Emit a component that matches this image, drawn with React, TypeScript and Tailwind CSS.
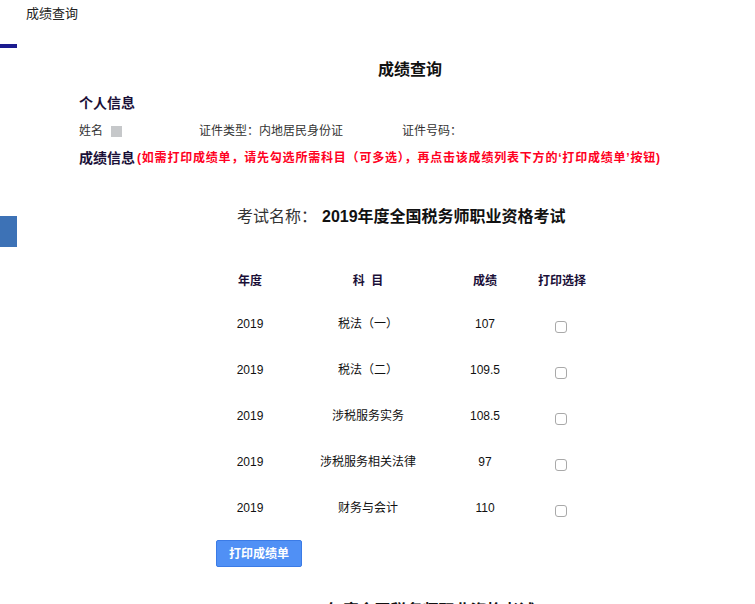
import React from "react";

type Score = { year: string; subject: string; score: string };

const scores: Score[] = [
  { year: "2019", subject: "税法（一）", score: "107" },
  { year: "2019", subject: "税法（二）", score: "109.5" },
  { year: "2019", subject: "涉税服务实务", score: "108.5" },
  { year: "2019", subject: "涉税服务相关法律", score: "97" },
  { year: "2019", subject: "财务与会计", score: "110" },
];

const font = { fontFamily: '"Liberation Sans", "Noto Sans CJK SC", sans-serif' };

export default function App() {
  return (
    <div
      className="w-[755px] h-[604px] overflow-hidden bg-white text-[#222]"
      style={font}
    >
      {/* top tab */}
      <div className="h-[44px] pl-[26px] pt-[5px] text-[13px] leading-[18px] text-[#222]">
        成绩查询
      </div>

      <div className="flex">
        {/* left rail */}
        <div className="w-[17px] shrink-0 flex flex-col">
          <div className="h-[4px] bg-[#1b1b8f]" />
          <div className="mt-[168px] h-[31px] bg-[#3d72b6]" />
        </div>

        <div className="ml-[62px] w-[662px] flex flex-col">
          <div className="mt-[16px] h-[20px] text-center text-[16px] leading-[20px] font-bold text-[#111]">
            成绩查询
          </div>

          <div className="mt-[13px] h-[20px] text-[14px] leading-[20px] font-bold text-[#1a0f38]">
            个人信息
          </div>

          <div className="mt-[9px] h-[18px] flex items-center text-[12px] leading-[18px] text-[#333]">
            <span>姓名</span>
            <span className="ml-[8px] w-[11px] h-[11px] bg-[#c6c8ca]" />
            <span className="ml-[77px]">证件类型：内地居民身份证</span>
            <span className="ml-[59px]">证件号码：</span>
          </div>

          <div className="mt-[8px] h-[20px] flex items-center whitespace-nowrap">
            <span className="text-[14px] leading-[20px] font-bold text-[#1a0f38]">成绩信息</span>
            <span className="ml-[2px] text-[12px] leading-[20px] font-bold tracking-[0.8px] text-[#ff0022]">
              (如需打印成绩单，请先勾选所需科目（可多选），再点击该成绩列表下方的‘打印成绩单’按钮)
            </span>
          </div>

          <div className="mt-[38px] h-[22px] ml-[158px] flex items-center whitespace-nowrap text-[16px] leading-[22px]">
            <span className="text-[#333]">考试名称：</span>
            <span className="ml-[5px] font-bold text-[#111]">2019年度全国税务师职业资格考试</span>
          </div>

          {/* table */}
          <div className="ml-[141px] mt-[44px]">
            <div className="grid grid-cols-[60px_176px_58px_96px] h-[18px] items-center text-center text-[12px] leading-[18px] font-bold text-[#1a0f38]">
              <span>年度</span>
              <span>科&nbsp;&nbsp;目</span>
              <span>成绩</span>
              <span>打印选择</span>
            </div>
            <div className="mt-[11px] flex flex-col">
              {scores.map((s) => (
                <div
                  key={s.subject}
                  className="grid grid-cols-[60px_176px_58px_96px] h-[46px] items-center text-center text-[12px] leading-[18px] text-[#111]"
                >
                  <span>{s.year}</span>
                  <span>{s.subject}</span>
                  <span>{s.score}</span>
                  <span className="flex justify-center pt-[6px] pr-[2px]">
                    <input
                      type="checkbox"
                      className="appearance-none w-[12px] h-[12px] border border-[#a9a9a9] rounded-[3px] bg-white"
                    />
                  </span>
                </div>
              ))}
            </div>
          </div>

          <div className="ml-[137px] mt-[9px]">
            <button className="w-[86px] h-[27px] rounded-[2px] border border-[#3b7be6] bg-[#5090f5] text-white text-[12px] font-bold">
              打印成绩单
            </button>
          </div>

          <div className="mt-[33px] ml-[212px] h-[22px] text-[16px] leading-[22px] font-bold text-[#111] whitespace-nowrap">
            2018年度全国税务师职业资格考试
          </div>
        </div>
      </div>
    </div>
  );
}
